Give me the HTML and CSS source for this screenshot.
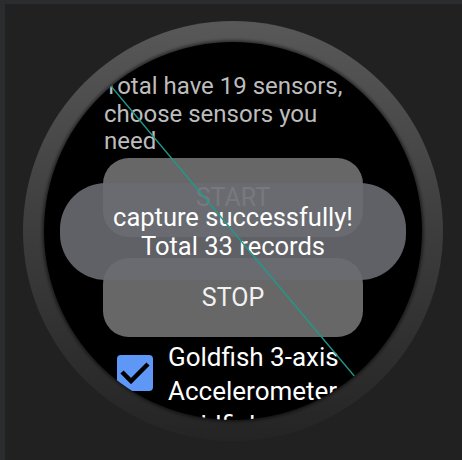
FILE: index.html
```html
<!DOCTYPE html>
<html>
<head>
<meta charset="utf-8">
<link rel="stylesheet" href="styles.css">
</head>
<body>
<div class="frame">
  <div class="watch">
    <div class="face">
      <div class="content">
        <p class="intro">Total have 19 sensors, choose sensors you need</p>
        <button class="btn">START</button>
        <button class="btn stop">STOP</button>
        <label class="item">
          <span class="box">
            <svg width="36" height="36" viewBox="0 0 36 36"><path d="M5 17 L14 26 L31 9" fill="none" stroke="#000" stroke-width="4.5"/></svg>
          </span>
          <span class="label">Goldfish 3-axis Accelerometer Goldfish</span>
        </label>
      </div>
      <div class="toast">
        <span>capture successfully!</span>
        <span>Total 33 records</span>
      </div>
      <svg class="guide" width="378" height="378" viewBox="0 0 378 378"><line x1="56" y1="31" x2="322" y2="348" stroke="#1f9a8b" stroke-width="1.3"/></svg>
    </div>
  </div>
</div>
</body>
</html>
```
FILE: styles.css
```css
* { box-sizing: border-box; }
html, body { margin: 0; padding: 0; background: #212121; }
.frame {
  width: 462px;
  height: 460px;
  background: #212121;
  border-top: 4px solid #2b2c2e;
  border-left: 5px solid #2b2c2e;
  padding: 17px 0 0 18px;
  overflow: hidden;
}
.watch {
  width: 420px;
  height: 420px;
  border-radius: 50%;
  background: linear-gradient(#585858, #3d3d3d 50%, #242424);
  padding: 21px;
}
.face {
  position: relative;
  width: 378px;
  height: 378px;
  border-radius: 50%;
  background: #000;
  overflow: hidden;
  box-shadow: 0 0 3px 2px rgba(0,0,0,0.45);
  font-family: Roboto, "Noto Sans", sans-serif;
}
.content {
  padding: 31px 0 0 59px;
}
.intro {
  margin: 0 0 0 1px;
  width: 258px;
  font-size: 24px;
  line-height: 27.5px;
  color: #bdbdbd;
}
.btn {
  display: block;
  width: 260px;
  height: 79px;
  margin-top: 2.5px;
  border: 0;
  border-radius: 26px;
  background: #676767;
  color: #f2f2f2;
  font-family: Roboto, "Noto Sans", sans-serif;
  font-size: 25px;
  padding: 0;
}
.btn.stop { margin-top: 21px; }
.item {
  display: flex;
  align-items: flex-start;
  margin-top: 3.1px;
  margin-left: 14px;
}
.box {
  flex: none;
  width: 36px;
  height: 36px;
  margin-top: 14.9px;
  margin-right: 15px;
  border-radius: 4px;
  background: #5e97f6;
}
.box svg { display: block; }
.label {
  width: 200px;
  font-size: 26px;
  line-height: 34px;
  color: #fff;
}
.toast {
  position: absolute;
  left: 16px;
  top: 141px;
  width: 346px;
  height: 97px;
  border-radius: 46px;
  background: rgba(105,108,113,0.9);
  color: #fff;
  font-size: 25.5px;
  line-height: 29px;
  display: flex;
  flex-direction: column;
  align-items: center;
  justify-content: center;
}
.guide {
  position: absolute;
  left: 0;
  top: 0;
}
```
